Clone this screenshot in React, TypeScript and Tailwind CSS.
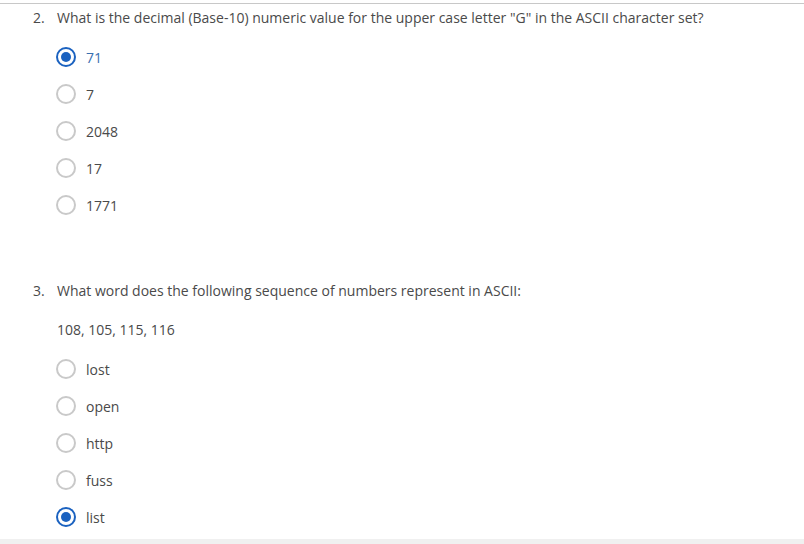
import React from "react";

type Opt = { label: string; checked?: boolean; blue?: boolean };

const q2: Opt[] = [
  { label: "71", checked: true, blue: true },
  { label: "7" },
  { label: "2048" },
  { label: "17" },
  { label: "1771" },
];

const q3: Opt[] = [
  { label: "lost" },
  { label: "open" },
  { label: "http" },
  { label: "fuss" },
  { label: "list", checked: true },
];

function Radio({ checked }: { checked?: boolean }) {
  if (checked) {
    return (
      <span className="w-5 h-5 rounded-full border-[2.5px] border-[#1b62c0] flex items-center justify-center shrink-0">
        <span className="w-[10px] h-[10px] rounded-full bg-[#1b62c0]" />
      </span>
    );
  }
  return <span className="w-5 h-5 rounded-full border-2 border-[#c9c9c9] shrink-0" />;
}

function Options({ items }: { items: Opt[] }) {
  return (
    <div className="pl-[56px] flex flex-col gap-[17px]">
      {items.map((o) => (
        <label key={o.label} className="flex items-center gap-[10px] h-5">
          <Radio checked={o.checked} />
          <span className={o.blue ? "text-[#3a6fb0]" : "text-[#4a4a4a]"}>{o.label}</span>
        </label>
      ))}
    </div>
  );
}

export default function App() {
  return (
    <div className="w-[804px] h-[544px] bg-white flex flex-col font-['Open_Sans',sans-serif] text-[14px] text-[#4a4a4a]">
      <div className="mt-[3px] border-t border-[#c8c8c8]" />
      <div className="flex-1">
        {/* Question 2 */}
        <div className="flex items-center h-[26px] pl-[33px]">
          <span className="w-[24px]">2.</span>
          <span>What is the decimal (Base-10) numeric value for the upper case letter "G" in the ASCII character set?</span>
        </div>
        <div className="mt-[17px]">
          <Options items={q2} />
        </div>

        {/* Question 3 */}
        <div className="flex items-center h-[26px] mt-[62px] pl-[33px]">
          <span className="w-[24px]">3.</span>
          <span>What word does the following sequence of numbers represent in ASCII:</span>
        </div>
        <div className="pl-[57px] mt-[13px] h-[26px] flex items-center">108, 105, 115, 116</div>
        <div className="mt-[17px]">
          <Options items={q3} />
        </div>
      </div>
      <div className="h-[5px] bg-[#f0f0f0]" />
    </div>
  );
}
